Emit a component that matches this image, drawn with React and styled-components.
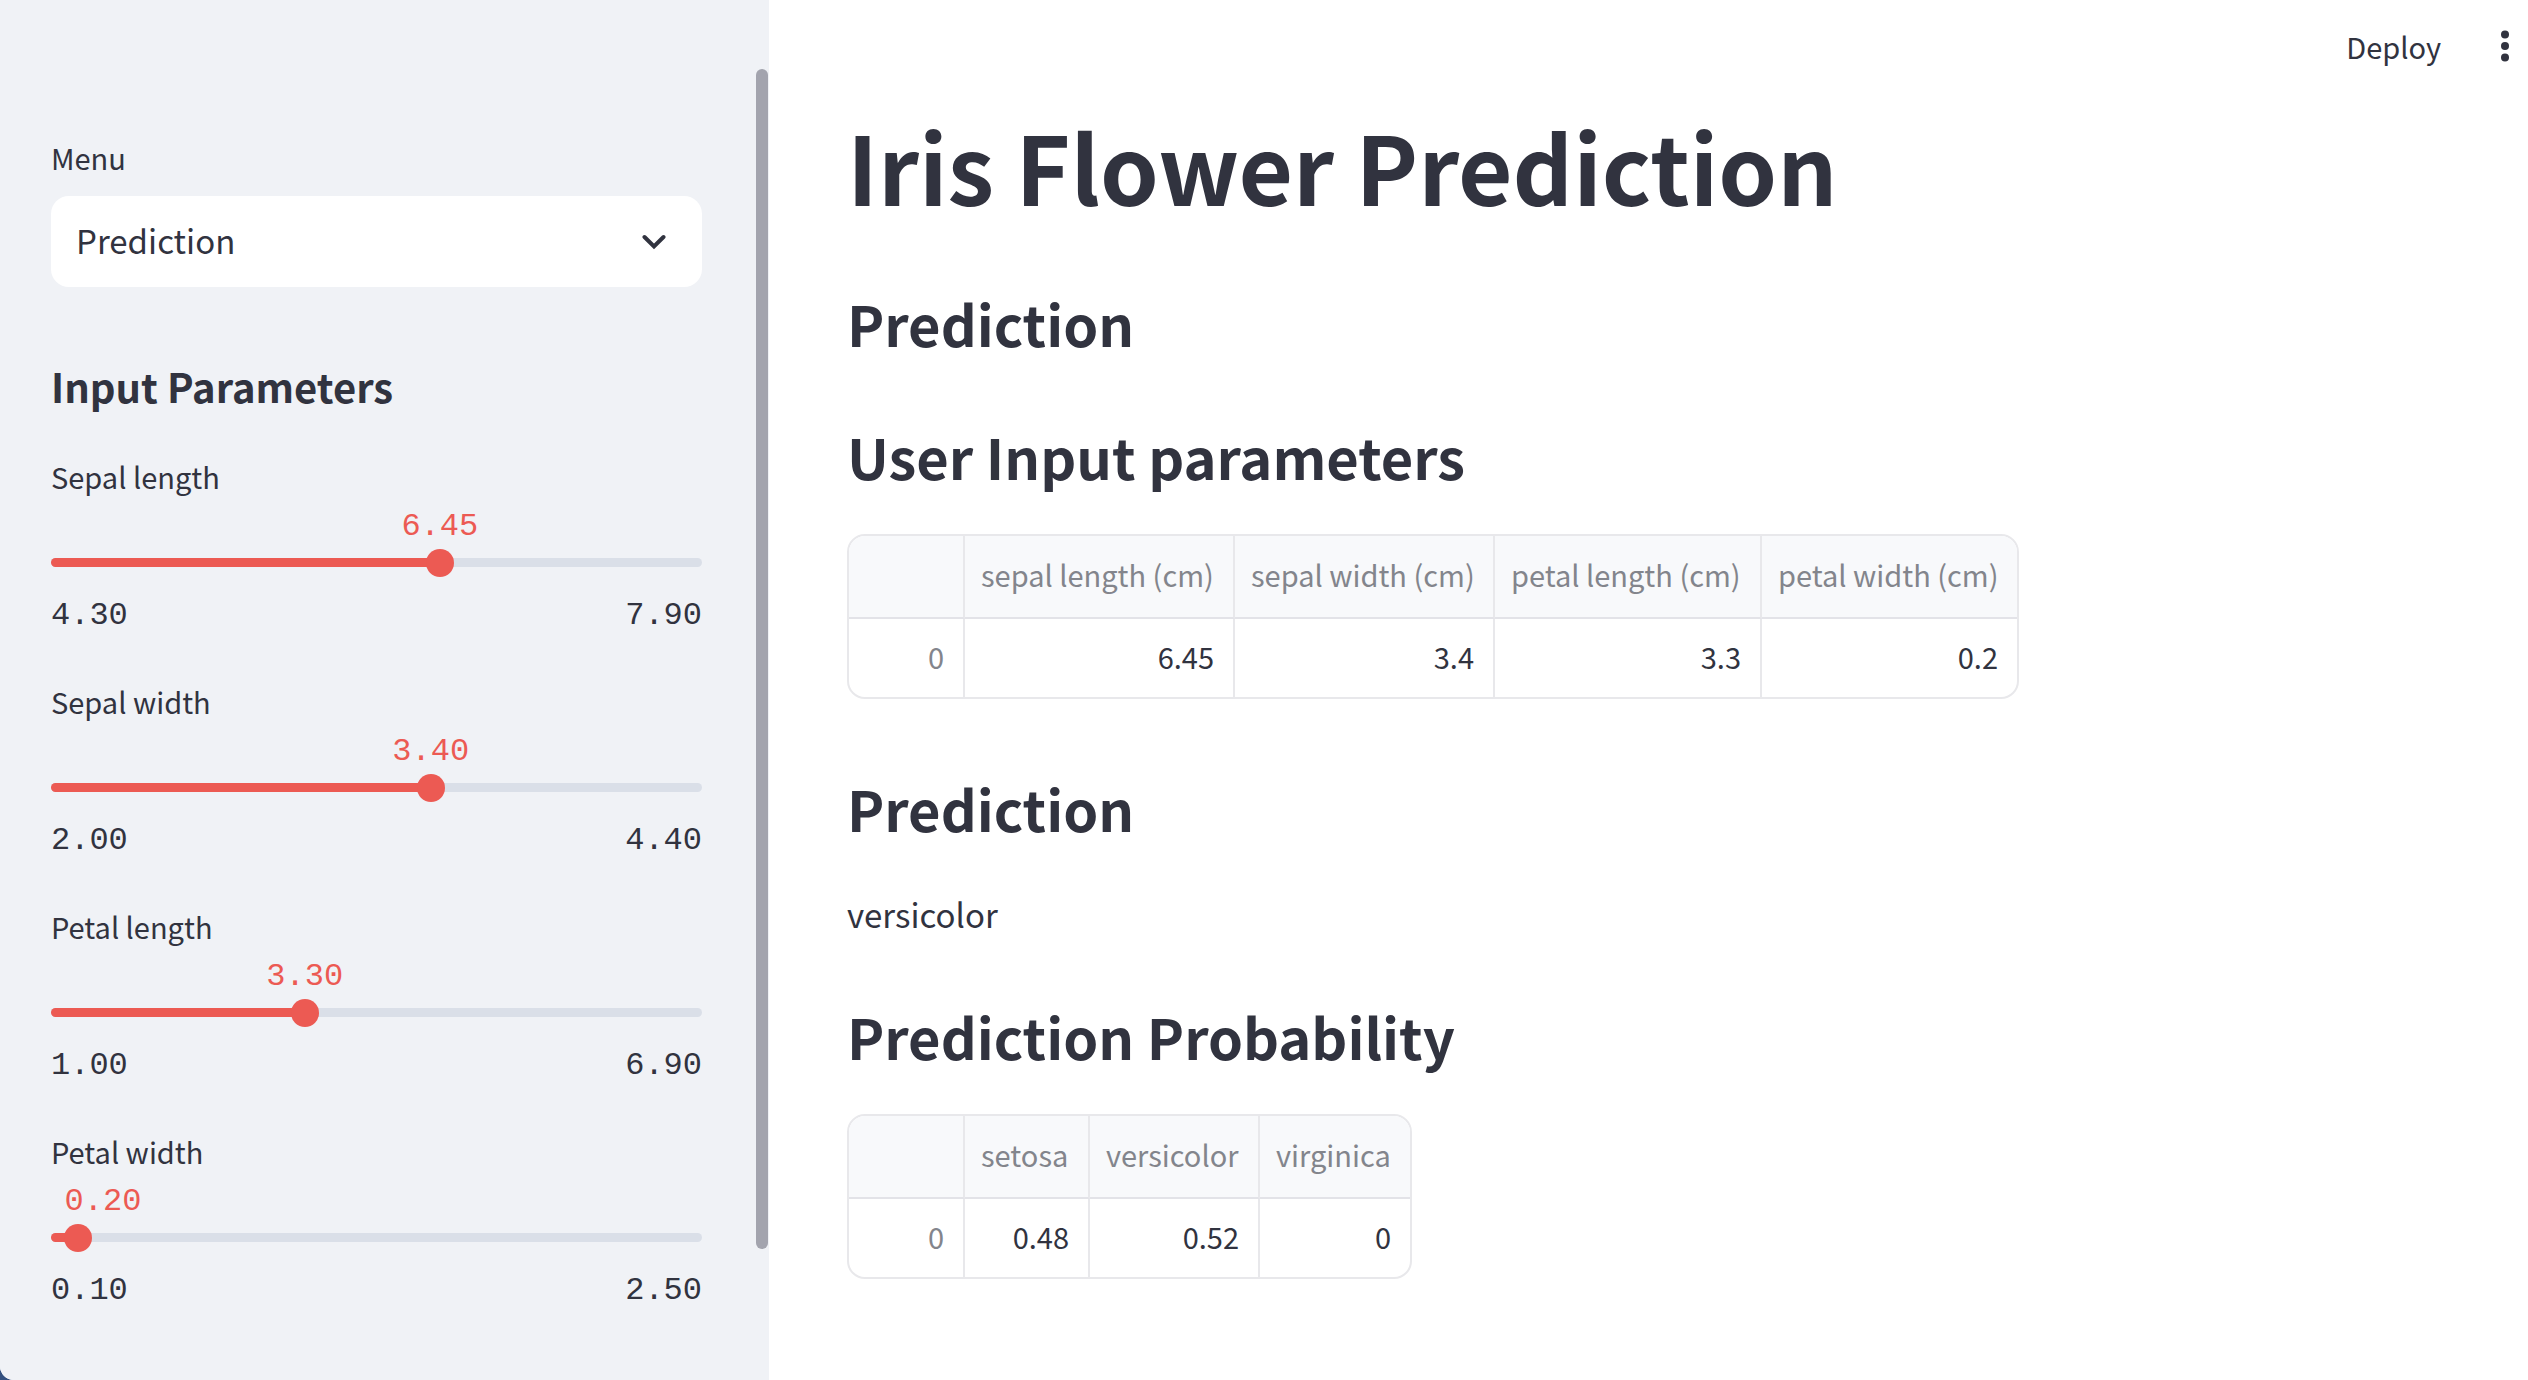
import React, { useId, useState } from "react";
import styled, { createGlobalStyle } from "styled-components";

const sans = `"Noto Sans CJK SC", "Noto Sans", sans-serif`;
const mono = `"Liberation Mono", "DejaVu Sans Mono", monospace`;

const color = {
  text: "#31333f",
  muted: "#83858c",
  primary: "#ec5a53",
  track: "#dadfe8",
  sidebar: "#f0f2f6",
  line: "#e8e8eb",
  headerCell: "#f8f9fb",
  backdrop: "#34507f",
};

const GlobalStyle = createGlobalStyle`
  *, *::before, *::after { box-sizing: border-box; }
  html { background: ${color.backdrop}; }
  body {
    margin: 0;
    color: ${color.text};
    font-family: ${sans};
  }
`;

const Page = styled.div`
  display: flex;
  min-height: 100vh;
  background: #fff;
  border-bottom-left-radius: 14px;
  overflow: hidden;
`;

const Sidebar = styled.aside`
  display: flex;
  flex: 0 0 769px;
  padding-right: 1px;
  background: ${color.sidebar};
`;

const SidebarContent = styled.div`
  flex: 1;
  padding: 134px 54px 60px 51px;
`;

const ScrollThumb = styled.div`
  width: 12px;
  margin: 69px 0 131px;
  border-radius: 6px;
  background: #a3a4ae;
`;

const Label = styled.label`
  display: block;
  font-size: 29px;
  line-height: 46px;
`;

const SelectBox = styled.div`
  display: grid;
  align-items: center;
  margin-top: 16px;

  > * {
    grid-area: 1 / 1;
  }

  > svg {
    justify-self: end;
    margin-right: 36px;
    pointer-events: none;
  }
`;

const Select = styled.select`
  width: 100%;
  height: 91px;
  padding: 0 80px 4px 25px;
  border: 0;
  border-radius: 18px;
  background: #fff;
  color: inherit;
  font-family: inherit;
  font-size: 33px;
  appearance: none;
`;

const SidebarHeading = styled.h2`
  margin: 74px 0 42px;
  font-size: 40px;
  font-weight: 700;
  line-height: 50px;
`;

const SliderList = styled.div`
  display: grid;
  gap: 43px;
`;

const SliderValue = styled.output`
  display: block;
  width: 78px;
  margin-top: 9px;
  color: ${color.primary};
  font-family: ${mono};
  font-size: 32px;
  line-height: 38px;
  text-align: center;
`;

const Rail = styled.div`
  display: grid;
  align-items: center;
  height: 33px;

  > * {
    grid-area: 1 / 1;
  }
`;

const Track = styled.div`
  height: 9px;
  border-radius: 5px;
  background: ${color.track};
  overflow: hidden;
`;

const Fill = styled.div`
  height: 100%;
  background: ${color.primary};
`;

const Range = styled.input`
  width: calc(100% + 28px);
  height: 28px;
  margin: 0 -14px;
  background: transparent;
  appearance: none;

  &::-webkit-slider-thumb {
    width: 28px;
    height: 28px;
    border-radius: 50%;
    background: ${color.primary};
    appearance: none;
  }
`;

const Limits = styled.div`
  display: flex;
  justify-content: space-between;
  margin-top: 18px;
  font-family: ${mono};
  font-size: 32px;
  line-height: 38px;
`;

const Main = styled.main`
  flex: 1;
  min-width: 0;
`;

const Toolbar = styled.header`
  display: flex;
  align-items: center;
  justify-content: flex-end;
  gap: 48px;
  height: 92px;
  padding-right: 7px;
`;

const ToolbarButton = styled.button`
  display: flex;
  align-items: center;
  padding: 0;
  border: 0;
  background: none;
  color: inherit;
  font-family: inherit;
  font-size: 29px;
  line-height: 46px;
`;

const Content = styled.div`
  padding: 17px 78px 78px;
`;

const Title = styled.h1`
  margin: 0;
  font-size: 94px;
  font-weight: 700;
  line-height: 112px;
`;

const Heading = styled.h2`
  margin: ${(p) => p.$space}px 0 0;
  font-size: 56px;
  font-weight: 700;
  line-height: 70px;
`;

const Paragraph = styled.p`
  margin: 44px 0 0;
  font-size: 33px;
  line-height: 54px;
`;

const TableFrame = styled.div`
  width: fit-content;
  margin-top: 43px;
  border: 2px solid ${color.line};
  border-radius: 18px;
  overflow: hidden;
`;

const Table = styled.table`
  border-collapse: separate;
  border-spacing: 0;
  table-layout: fixed;
  font-size: 29px;
  line-height: 46px;
`;

const Th = styled.th`
  width: ${(p) => p.$width}px;
  height: 83px;
  padding: 0 0 5px 16px;
  border-right: 2px solid ${color.line};
  border-bottom: 2px solid #e3e3e8;
  background: ${color.headerCell};
  color: ${color.muted};
  font-weight: 400;
  text-align: left;
  white-space: nowrap;

  &:last-child {
    border-right: 0;
  }
`;

const Td = styled.td`
  height: 78px;
  padding: 0 19px 5px 0;
  border-right: 2px solid ${color.line};
  color: ${(p) => (p.$index ? color.muted : color.text)};
  font-weight: 400;
  text-align: right;

  &:last-child {
    border-right: 0;
  }
`;

function Chevron() {
  return (
    <svg width="24" height="16" viewBox="0 0 24 16" fill="none" aria-hidden="true">
      <path d="M2.5 3 12 12.500 21.500 3" stroke={color.text} strokeWidth="4" strokeLinecap="round" strokeLinejoin="miter" />
    </svg>
  );
}

function Dots() {
  return (
    <svg width="32" height="32" viewBox="0 0 32 32" fill="currentColor" aria-hidden="true">
      <circle cx="16" cy="4.500" r="4" />
      <circle cx="16" cy="16" r="4" />
      <circle cx="16" cy="27.500" r="4" />
    </svg>
  );
}

function Slider({ label, min, max, initial }) {
  const id = useId();
  const [value, setValue] = useState(initial);
  const percent = ((value - min) / (max - min)) * 100;

  return (
    <div>
      <Label htmlFor={id}>{label}</Label>
      <SliderValue
        htmlFor={id}
        style={{ marginLeft: `clamp(13px, calc(${percent}% - 39px), calc(100% - 91px))` }}
      >
        {value.toFixed(2)}
      </SliderValue>
      <Rail>
        <Track>
          <Fill style={{ width: `${percent}%` }} />
        </Track>
        <Range
          id={id}
          type="range"
          min={min}
          max={max}
          step="0.01"
          value={value}
          onChange={(e) => setValue(Number(e.target.value))}
        />
      </Rail>
      <Limits>
        <span>{min.toFixed(2)}</span>
        <span>{max.toFixed(2)}</span>
      </Limits>
    </div>
  );
}

function DataTable({ label, columns }) {
  return (
    <TableFrame>
      <Table aria-label={label}>
        <thead>
          <tr>
            <Th $width={116} />
            {columns.map((c) => (
              <Th key={c.name} scope="col" $width={c.width}>
                {c.name}
              </Th>
            ))}
          </tr>
        </thead>
        <tbody>
          <tr>
            <Td $index>0</Td>
            {columns.map((c) => (
              <Td key={c.name}>{c.value}</Td>
            ))}
          </tr>
        </tbody>
      </Table>
    </TableFrame>
  );
}

const sliders = [
  { label: "Sepal length", min: 4.3, max: 7.9, initial: 6.45 },
  { label: "Sepal width", min: 2, max: 4.4, initial: 3.4 },
  { label: "Petal length", min: 1, max: 6.9, initial: 3.3 },
  { label: "Petal width", min: 0.1, max: 2.5, initial: 0.2 },
];

const inputColumns = [
  { name: "sepal length (cm)", value: "6.45", width: 270 },
  { name: "sepal width (cm)", value: "3.4", width: 260 },
  { name: "petal length (cm)", value: "3.3", width: 267 },
  { name: "petal width (cm)", value: "0.2", width: 255 },
];

const probabilityColumns = [
  { name: "setosa", value: "0.48", width: 125 },
  { name: "versicolor", value: "0.52", width: 170 },
  { name: "virginica", value: "0", width: 150 },
];

export default function App() {
  return (
    <>
      <GlobalStyle />
      <Page>
        <Sidebar>
          <SidebarContent>
            <Label htmlFor="menu">Menu</Label>
            <SelectBox>
              <Select id="menu" defaultValue="Prediction">
                <option>Prediction</option>
              </Select>
              <Chevron />
            </SelectBox>
            <SidebarHeading>Input Parameters</SidebarHeading>
            <SliderList>
              {sliders.map((s) => (
                <Slider key={s.label} {...s} />
              ))}
            </SliderList>
          </SidebarContent>
          <ScrollThumb />
        </Sidebar>
        <Main>
          <Toolbar>
            <ToolbarButton type="button">Deploy</ToolbarButton>
            <ToolbarButton type="button" aria-label="Main menu">
              <Dots />
            </ToolbarButton>
          </Toolbar>
          <Content>
            <Title>Iris Flower Prediction</Title>
            <Heading $space={67}>Prediction</Heading>
            <Heading $space={63}>User Input parameters</Heading>
            <DataTable label="User input parameters" columns={inputColumns} />
            <Heading $space={74}>Prediction</Heading>
            <Paragraph>versicolor</Paragraph>
            <Heading $space={60}>Prediction Probability</Heading>
            <DataTable label="Prediction probability" columns={probabilityColumns} />
          </Content>
        </Main>
      </Page>
    </>
  );
}
